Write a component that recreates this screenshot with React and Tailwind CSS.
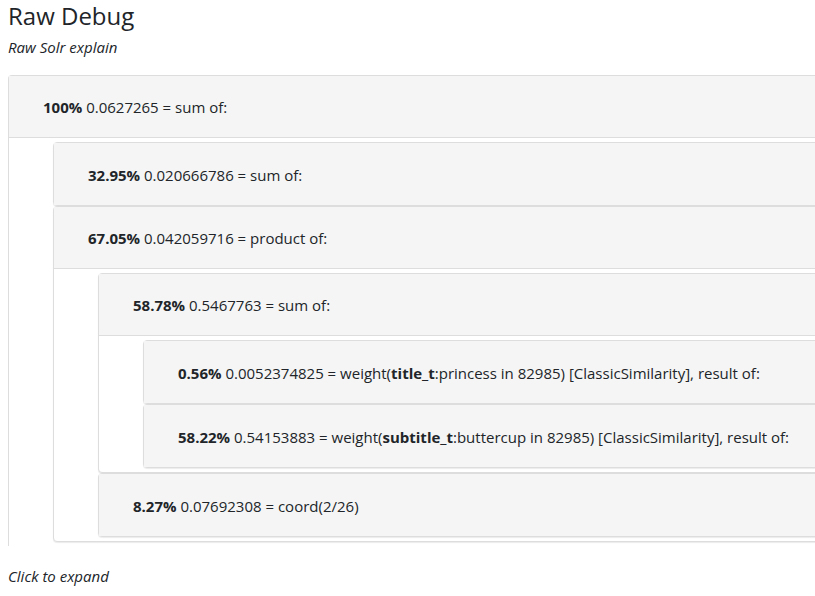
import React from "react";

const font = { fontFamily: '"Open Sans", "Noto Sans", sans-serif' };

function Heading({ pct, children, hasBody }) {
  return (
    <div
      className={
        "bg-[#f5f5f5] h-[62px] flex items-center pl-[34px] pt-[2px] whitespace-nowrap text-[15px] text-[#212529] " +
        (hasBody ? "border-b border-[#ddd]" : "")
      }
    >
      <span>
        <b className="font-bold">{pct}</b> {children}
      </span>
    </div>
  );
}

function Panel({ pct, text, children }) {
  const hasBody = !!children;
  return (
    <div className="border border-[#ddd] rounded-[4px] bg-white shadow-[0_1px_1px_rgba(0,0,0,0.08)]">
      <Heading pct={pct} hasBody={hasBody}>
        {text}
      </Heading>
      {hasBody && <div className="pl-[44px] pt-[4px] pb-[4px]">{children}</div>}
    </div>
  );
}

export default function App() {
  return (
    <div className="w-[815px] h-[596px] overflow-hidden bg-white" style={font}>
      <div className="px-[8px]">
        <h3 className="text-[24px] font-medium text-[#212529] leading-[30px] pt-[1px]">Raw Debug</h3>
        <p className="italic text-[15px] text-[#212529] mt-[6px] leading-[20px]">Raw Solr explain</p>
        <div className="mt-[18px] w-[1000px]">
          <div className="border-t border-l border-[#ddd] rounded-tl-[4px]">
            <div className="bg-[#f5f5f5] h-[62px] flex items-center pl-[34px] pt-[2px] whitespace-nowrap text-[15px] text-[#212529] border-b border-[#ddd]">
              <span>
                <b className="font-bold">100%</b> 0.0627265 = sum of:
              </span>
            </div>
            <div className="pl-[44px] pt-[4px] pb-[4px]">
              <Panel pct="32.95%" text="0.020666786 = sum of:" />
              <Panel pct="67.05%" text="0.042059716 = product of:">
                <Panel pct="58.78%" text="0.5467763 = sum of:">
                  <Panel
                    pct="0.56%"
                    text={
                      <>
                        0.0052374825 = weight(<b className="font-bold">title_t</b>:princess in 82985) [ClassicSimilarity], result of:
                      </>
                    }
                  />
                  <Panel
                    pct="58.22%"
                    text={
                      <>
                        0.54153883 = weight(<b className="font-bold">subtitle_t</b>:buttercup in 82985) [ClassicSimilarity], result of:
                      </>
                    }
                  />
                </Panel>
                <Panel pct="8.27%" text="0.07692308 = coord(2/26)" />
              </Panel>
            </div>
          </div>
        </div>
        <p className="italic text-[15px] text-[#212529] mt-[20px] leading-[20px]">Click to expand</p>
      </div>
    </div>
  );
}
